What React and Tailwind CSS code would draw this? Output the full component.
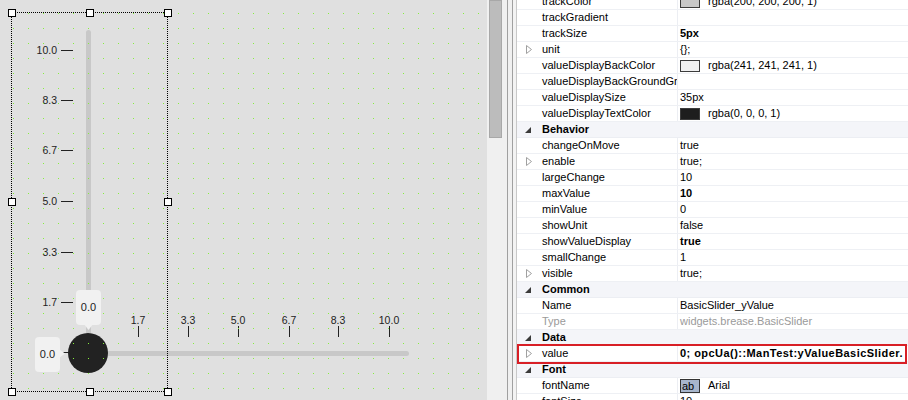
import React from "react";

const rows = [
  { n: "trackColor", swatch: "#c8c8c8", v: "rgba(200, 200, 200, 1)" },
  { n: "trackGradient", v: "" },
  { n: "trackSize", v: "5px", bold: true },
  { n: "unit", v: "{};", arrow: true },
  { n: "valueDisplayBackColor", swatch: "#f1f1f1", v: "rgba(241, 241, 241, 1)" },
  { n: "valueDisplayBackGroundGradient", v: "" },
  { n: "valueDisplaySize", v: "35px" },
  { n: "valueDisplayTextColor", swatch: "#1e1e1e", v: "rgba(0, 0, 0, 1)" },
  { cat: "Behavior" },
  { n: "changeOnMove", v: "true" },
  { n: "enable", v: "true;", arrow: true },
  { n: "largeChange", v: "10" },
  { n: "maxValue", v: "10", bold: true },
  { n: "minValue", v: "0" },
  { n: "showUnit", v: "false" },
  { n: "showValueDisplay", v: "true", bold: true },
  { n: "smallChange", v: "1" },
  { n: "visible", v: "true;", arrow: true },
  { cat: "Common" },
  { n: "Name", v: "BasicSlider_yValue" },
  { n: "Type", v: "widgets.brease.BasicSlider", gray: true },
  { cat: "Data" },
  { n: "value", v: "0; opcUa()::ManTest:yValueBasicSlider.", arrow: true, bold: true, red: true },
  { cat: "Font" },
  { n: "fontName", v: "Arial", ab: true },
  { n: "fontSize", v: "10" },
];

function Collapsed() {
  return (
    <svg width="6" height="9" viewBox="0 0 6 9" className="block">
      <polygon points="0.5,0.5 5.5,4.5 0.5,8.5" fill="#fff" stroke="#a0a0a0" strokeWidth="1" />
    </svg>
  );
}

function Expanded() {
  return (
    <svg width="6" height="6" viewBox="0 0 6 6" className="block">
      <polygon points="6,0 6,6 0,6" fill="#3a3a3a" />
    </svg>
  );
}

function Row({ r }) {
  if (r.cat) {
    return (
      <div className="flex h-[16px] border-b border-[#eceef3] bg-[#f4f5f9]">
        <div className="flex w-[20px] shrink-0 items-center pl-[8px]">
          <Expanded />
        </div>
        <div className="pl-[5px] text-[11px] font-bold leading-[15px] text-black">{r.cat}</div>
      </div>
    );
  }
  return (
    <div className="relative flex h-[16px] border-b border-[#eef0f4] bg-white">
      <div className="flex w-[20px] shrink-0 items-center pl-[9px]">{r.arrow && <Collapsed />}</div>
      <div
        className={
          "w-[141px] shrink-0 overflow-hidden whitespace-nowrap border-r border-[#eceef3] pl-[5px] text-[11px] leading-[15px] " +
          (r.gray ? "text-[#9a9a9a]" : "text-black")
        }
      >
        {r.n}
      </div>
      <div
        className={
          "flex flex-1 items-center overflow-hidden whitespace-nowrap pl-[2px] text-[11px] leading-[15px] " +
          (r.gray ? "text-[#9a9a9a] " : "text-black ") +
          (r.bold ? "font-bold " : "") +
          (r.red ? "tracking-[0.45px]" : "")
        }
      >
        {r.swatch && (
          <span
            className="mr-[8px] inline-block h-[12px] w-[20px] shrink-0 border border-[#3c3c3c]"
            style={{ backgroundColor: r.swatch }}
          />
        )}
        {r.ab && (
          <span className="mr-[8px] inline-flex h-[14px] w-[20px] shrink-0 items-center border border-[#333] bg-[#a7b6cc] pl-[1px] text-[11px] leading-[12px]">
            ab
          </span>
        )}
        {r.v}
      </div>
      {r.red && (
        <div className="pointer-events-none absolute left-0 right-[1px] top-[-2px] bottom-[-3px] border-2 border-[#d81f26]" />
      )}
    </div>
  );
}

const vTicks = [
  { y: 50, t: "10.0" },
  { y: 100, t: "8.3" },
  { y: 150, t: "6.7" },
  { y: 201, t: "5.0" },
  { y: 252, t: "3.3" },
  { y: 302, t: "1.7" },
  { y: 352, t: "" },
];
const hTicks = [
  { x: 138, t: "1.7" },
  { x: 188, t: "3.3" },
  { x: 238, t: "5.0" },
  { x: 289, t: "6.7" },
  { x: 338, t: "8.3" },
  { x: 389, t: "10.0" },
];

const handles = [
  [8, 9],
  [86, 9],
  [164, 9],
  [8, 198],
  [164, 198],
  [8, 388],
  [86, 388],
  [164, 388],
];

function Canvas() {
  return (
    <div className="relative h-[400px] w-[487px] shrink-0 overflow-hidden bg-[#e0e0e0] font-['Liberation_Sans',Arial,sans-serif] text-[10.5px] text-[#222]">
      {/* vertical track */}
      <div className="absolute left-[86px] top-[30px] h-[325px] w-[5px] rounded-t-[3px] bg-[#c8c8c8]" />
      {/* horizontal track */}
      <div className="absolute left-[88px] top-[351px] h-[5px] w-[321px] rounded-r-[3px] bg-[#c8c8c8]" />
      {/* vertical ticks */}
      {vTicks.map((t) => (
        <React.Fragment key={"v" + t.y}>
          {t.t && (
            <div
              className="absolute right-[430px] w-[30px] text-right leading-[12px]"
              style={{ top: t.y - 6 }}
            >
              {t.t}
            </div>
          )}
          <div className="absolute left-[61px] h-px w-[12px] bg-[#222]" style={{ top: t.y }} />
        </React.Fragment>
      ))}
      {/* horizontal ticks */}
      {hTicks.map((t) => (
        <React.Fragment key={"h" + t.x}>
          <div
            className="absolute top-[314px] w-[30px] text-center leading-[12px]"
            style={{ left: t.x - 15 }}
          >
            {t.t}
          </div>
          <div className="absolute top-[326px] h-[11px] w-px bg-[#222]" style={{ left: t.x }} />
        </React.Fragment>
      ))}
      {/* knob */}
      <div className="absolute left-[68px] top-[333px] h-[40px] w-[40px] rounded-full bg-[#222]" />
      {/* dot grid */}
      <svg className="pointer-events-none absolute inset-0" width="487" height="400">
        <defs>
          <pattern id="dots" x="13" y="13" width="15" height="15" patternUnits="userSpaceOnUse">
            <rect x="0" y="0" width="1" height="1" fill="#86f03c" />
          </pattern>
        </defs>
        <rect width="487" height="400" fill="url(#dots)" />
      </svg>
      {/* vertical value display */}
      <div className="absolute left-[76px] top-[290px] flex h-[35px] w-[25px] items-center justify-center rounded-[4px] bg-[#f1f1f1] text-[11px]">
        0.0
      </div>
      <svg className="absolute left-[84px] top-[324px]" width="9" height="6" viewBox="0 0 9 6">
        <polygon points="0,0 9,0 4.5,6" fill="#f1f1f1" />
      </svg>
      {/* horizontal value display */}
      <div className="absolute left-[35px] top-[337px] flex h-[35px] w-[25px] items-center justify-center rounded-[4px] bg-[#f1f1f1] text-[11px]">
        0.0
      </div>
      <svg className="absolute left-[59px] top-[349px]" width="6" height="9" viewBox="0 0 6 9">
        <polygon points="0,0 6,4.5 0,9" fill="#f1f1f1" />
      </svg>
      {/* selection */}
      <div className="absolute left-[11px] top-[12px] h-[380px] w-[157px] border border-dotted border-black" />
      {handles.map(([x, y]) => (
        <div
          key={x + "-" + y}
          className="absolute h-[8px] w-[8px] border border-black bg-white"
          style={{ left: x, top: y }}
        />
      ))}
    </div>
  );
}

export default function App() {
  return (
    <div className="flex h-[400px] w-[908px] overflow-hidden bg-white font-['Liberation_Sans',Arial,sans-serif]">
      <Canvas />
      {/* scrollbar */}
      <div className="relative h-[400px] w-[20px] shrink-0 bg-[#f0f0f0]">
        <div className="absolute left-[2px] top-0 h-[138px] w-[13px] border border-[#a8a8a8] bg-[#bcbcbc]" />
      </div>
      {/* splitter */}
      <div className="flex h-[400px] shrink-0">
        <div className="w-px bg-[#a0a0a0]" />
        <div className="w-[4px] bg-[#f0f0f0]" />
        <div className="w-px bg-[#a0a0a0]" />
        <div className="w-[3px] bg-[#f3f3f3]" />
        <div className="w-px bg-[#c8c8c8]" />
      </div>
      {/* property grid */}
      <div className="h-[400px] flex-1 overflow-hidden bg-white">
        <div className="mt-[-6px]">
          {rows.map((r, i) => (
            <Row key={i} r={r} />
          ))}
        </div>
      </div>
    </div>
  );
}
